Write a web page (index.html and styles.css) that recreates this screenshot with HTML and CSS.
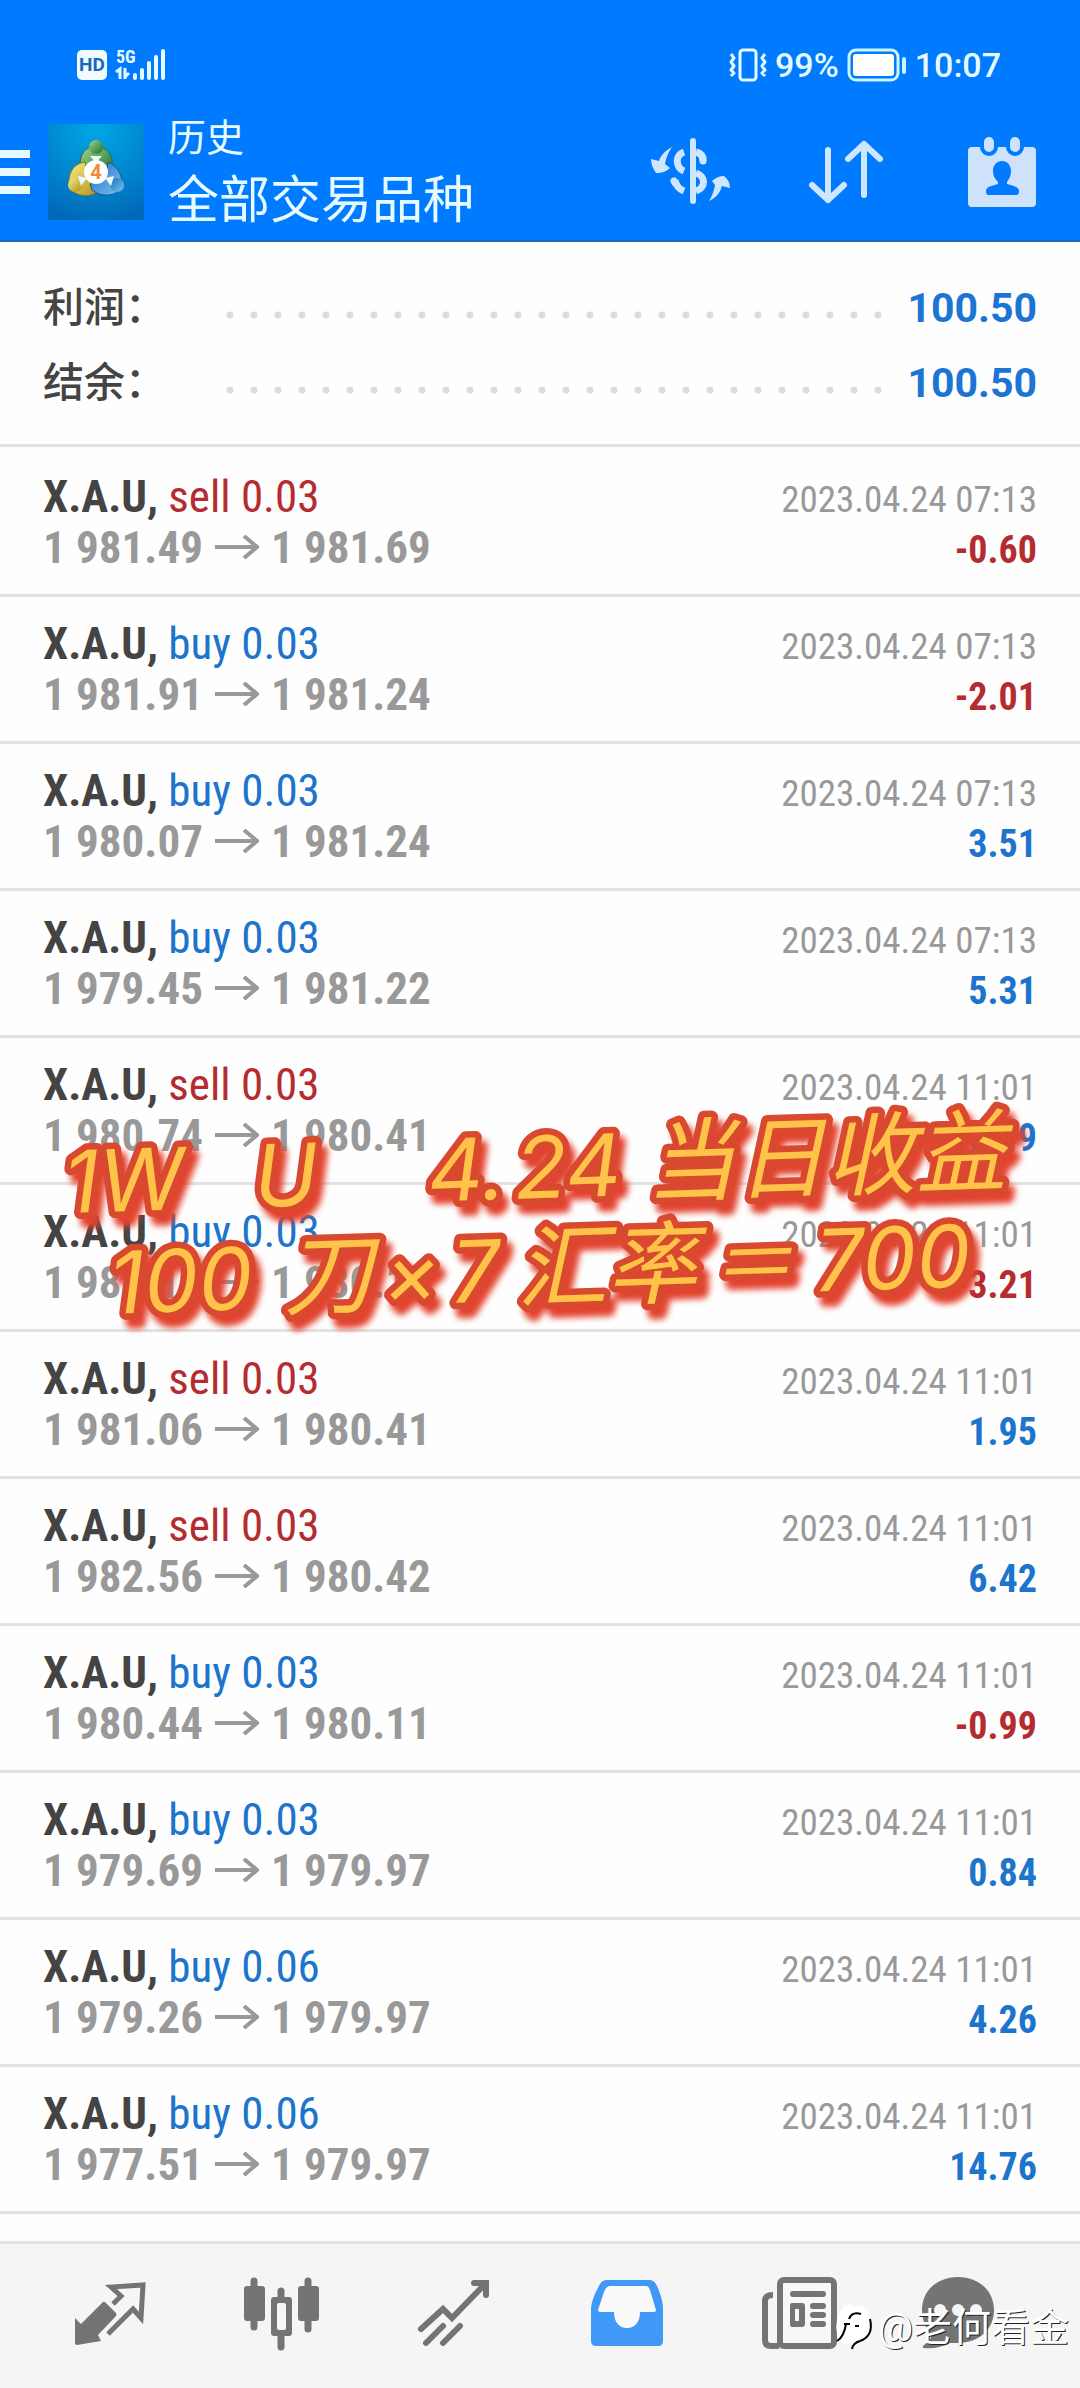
FILE: index.html
```html
<!DOCTYPE html>
<html lang="zh-CN">
<head>
<meta charset="utf-8">
<meta name="viewport" content="width=device-width, initial-scale=1">
<title>历史</title>
<link rel="stylesheet" href="styles.css">
</head>
<body>
<div class="app">
  <header class="header">
    <div class="status">
      <div class="status-side">
        <span class="hd">HD</span>
        <svg class="signal" width="52" height="34" viewBox="0 0 52 34" aria-hidden="true">
          <text class="signal-label" x="1" y="15">5G</text>
          <path d="M1 24l4-3v10M10 20v11M10 29l4-4" fill="none" stroke="#e6fbff" stroke-width="3"/>
          <path d="M20 27v3M27 22v8M34 15v15M41 9v21M48 3v27" stroke="#e6fbff" stroke-width="4" stroke-linecap="round"/>
        </svg>
      </div>
      <div class="status-side">
        <svg width="38" height="34" viewBox="0 0 38 34" aria-hidden="true" fill="none" stroke="#e6fbff" stroke-width="3">
          <rect x="11" y="2" width="16" height="30" rx="3"/>
          <path d="M2 6l3 4-3 4 3 4-3 4 3 3-3 3M36 6l-3 4 3 4-3 4 3 4-3 3 3 3" stroke-linejoin="round"/>
        </svg>
        <span>99%</span>
        <svg width="60" height="34" viewBox="0 0 60 34" aria-hidden="true">
          <rect x="2" y="2" width="49" height="30" rx="7" fill="none" stroke="#c9f6ff" stroke-width="3"/>
          <rect x="6" y="6" width="41" height="22" rx="3" fill="#fff"/>
          <rect x="55" y="9" width="4" height="17" rx="2" fill="#c9f6ff"/>
        </svg>
        <span class="clock">10:07</span>
      </div>
    </div>
    <div class="toolbar">
      <button class="menu" type="button" aria-label="菜单"><i></i><i></i><i></i></button>
      <svg class="logo" width="96" height="96" viewBox="0 0 96 96" aria-hidden="true">
        <defs>
          <radialGradient id="sky" cx="0.5" cy="0.05" r="1"><stop offset="0" stop-color="#00a6e6"/><stop offset="0.5" stop-color="#0089d0"/><stop offset="1" stop-color="#0068b8"/></radialGradient>
          <linearGradient id="green" x2="1" y2="1"><stop offset="0" stop-color="#a5d68a"/><stop offset="1" stop-color="#17702f"/></linearGradient>
          <linearGradient id="gold" x2="1" y2="1"><stop offset="0" stop-color="#f7ec8a"/><stop offset="1" stop-color="#b08f12"/></linearGradient>
          <linearGradient id="blue" x2="1" y2="1"><stop offset="0" stop-color="#1b6fc0"/><stop offset="1" stop-color="#7cc4f2"/></linearGradient>
        </defs>
        <rect width="96" height="96" fill="url(#sky)"/>
        <path d="M32 44C31 30 38 22 48 22s18 9 16 22l-5 9-22-1z" fill="url(#green)" stroke="#2b6b45"/>
        <path d="M37 38C24 40 20 50 21 63c6 9 18 11 27 6l4-8-12-8z" fill="url(#gold)" stroke="#6d7a2c"/>
        <path d="M60 38c11 5 15 15 14 26-6 8-20 10-30 2l-2-6 16-6z" fill="url(#blue)" stroke="#1d4f8c"/>
        <circle cx="48" cy="23" r="7" fill="url(#green)"/>
        <circle cx="27" cy="61" r="7" fill="url(#gold)"/>
        <circle cx="69" cy="61" r="7" fill="url(#blue)"/>
        <path d="M42 32h12l-6 7zM30 52l9 2-6 8zM66 52l-9 2 6 8z" fill="#e8fbf4"/>
        <circle cx="48" cy="48" r="12" fill="#fff"/>
        <text class="logo-digit" x="48" y="55" text-anchor="middle">4</text>
      </svg>
      <div class="titles">
        <div class="section">历史</div>
        <h1>全部交易品种</h1>
      </div>
      <div class="actions">
        <button type="button" aria-label="按货币">
          <svg width="96" height="96" viewBox="0 0 96 96">
            <path d="M51 17v60" stroke="#cfe6ff" stroke-width="6" stroke-linecap="round"/>
            <g fill="none" stroke="#cfe6ff" stroke-width="7">
              <path d="M42 28c-9 3-9 15 0 19M54 28c5 1 7 4 7 9" /><path d="M33 56c1 6 4 9 9 11M54 49c10 3 10 15 0 18"/>
              <path d="M61 34v3M32 57l1 2" stroke-linecap="round"/>
            </g>
            <path d="M30 23c-7 4-11 8-13 14l-8-2c0 5 2 10 5 14 6 0 10-1 14-5l-5-4c1-6 3-11 7-17zM67 77c7-3 11-8 13-15l8 2c0-5-2-9-6-12-5 0-9 2-12 5l3 4c-1 6-3 11-6 16z" fill="#cfe6ff"/>
          </svg>
        </button>
        <button type="button" aria-label="排序">
          <svg width="96" height="96" viewBox="0 0 96 96" fill="none" stroke="#cfe6ff" stroke-width="6" stroke-linecap="round" stroke-linejoin="round">
            <path d="M30 26v50M14 61l16 15 16-15M66 71V20M50 35l16-15 16 15"/>
          </svg>
        </button>
        <button type="button" aria-label="时间段">
          <svg width="96" height="96" viewBox="0 0 96 96">
            <rect x="14" y="23" width="68" height="60" rx="4" fill="#cfe2fc"/>
            <g fill="#cfe2fc" stroke="#007aff" stroke-width="4"><rect x="28" y="11" width="14" height="19" rx="7"/><rect x="54" y="11" width="14" height="19" rx="7"/></g>
            <path d="M48 37c5 0 9 4 9 10 0 5-2 8-4 11v2c7 2 12 3 12 7 0 3-1 4-3 4H35c-2 0-3-1-3-4 0-4 5-5 12-7v-2c-3-3-5-6-5-11 0-6 4-10 9-10z" fill="#007aff"/>
          </svg>
        </button>
      </div>
    </div>
  </header>

  <main class="content">
    <dl class="summary">
      <div><dt>利润：</dt><dd class="dots"></dd><dd>100.50</dd></div>
      <div><dt>结余：</dt><dd class="dots"></dd><dd>100.50</dd></div>
    </dl>
    <ul class="deals">
      <li><b>X.A.U, <span class="sell">sell 0.03</span></b><time>2023.04.24 07:13</time><span class="price">1 981.49<svg class="to"><use href="#to"/></svg>1 981.69</span><strong class="loss">-0.60</strong></li>
      <li><b>X.A.U, <span class="buy">buy 0.03</span></b><time>2023.04.24 07:13</time><span class="price">1 981.91<svg class="to"><use href="#to"/></svg>1 981.24</span><strong class="loss">-2.01</strong></li>
      <li><b>X.A.U, <span class="buy">buy 0.03</span></b><time>2023.04.24 07:13</time><span class="price">1 980.07<svg class="to"><use href="#to"/></svg>1 981.24</span><strong class="gain">3.51</strong></li>
      <li><b>X.A.U, <span class="buy">buy 0.03</span></b><time>2023.04.24 07:13</time><span class="price">1 979.45<svg class="to"><use href="#to"/></svg>1 981.22</span><strong class="gain">5.31</strong></li>
      <li><b>X.A.U, <span class="sell">sell 0.03</span></b><time>2023.04.24 11:01</time><span class="price">1 980.74<svg class="to"><use href="#to"/></svg>1 980.41</span><strong class="gain">0.99</strong></li>
      <li><b>X.A.U, <span class="buy">buy 0.03</span></b><time>2023.04.24 11:01</time><span class="price">1 981.18<svg class="to"><use href="#to"/></svg>1 980.11</span><strong class="loss">-3.21</strong></li>
      <li><b>X.A.U, <span class="sell">sell 0.03</span></b><time>2023.04.24 11:01</time><span class="price">1 981.06<svg class="to"><use href="#to"/></svg>1 980.41</span><strong class="gain">1.95</strong></li>
      <li><b>X.A.U, <span class="sell">sell 0.03</span></b><time>2023.04.24 11:01</time><span class="price">1 982.56<svg class="to"><use href="#to"/></svg>1 980.42</span><strong class="gain">6.42</strong></li>
      <li><b>X.A.U, <span class="buy">buy 0.03</span></b><time>2023.04.24 11:01</time><span class="price">1 980.44<svg class="to"><use href="#to"/></svg>1 980.11</span><strong class="loss">-0.99</strong></li>
      <li><b>X.A.U, <span class="buy">buy 0.03</span></b><time>2023.04.24 11:01</time><span class="price">1 979.69<svg class="to"><use href="#to"/></svg>1 979.97</span><strong class="gain">0.84</strong></li>
      <li><b>X.A.U, <span class="buy">buy 0.06</span></b><time>2023.04.24 11:01</time><span class="price">1 979.26<svg class="to"><use href="#to"/></svg>1 979.97</span><strong class="gain">4.26</strong></li>
      <li><b>X.A.U, <span class="buy">buy 0.06</span></b><time>2023.04.24 11:01</time><span class="price">1 977.51<svg class="to"><use href="#to"/></svg>1 979.97</span><strong class="gain">14.76</strong></li>
      <li><b>X.A.U, <span class="sell">sell 0.03</span></b></li>
    </ul>
  </main>

  <nav class="tabs">
    <button type="button" aria-label="行情">
      <svg width="96" height="96" viewBox="0 0 96 96">
        <path d="M51 36l8-8-10-9 32-2-2 33-8-9-25 25" fill="none" stroke="#747474" stroke-width="5"/>
        <path d="M41 34q1-1 3 1l10 10q1 2 0 3L36 67l3 6-24 4q-2 0-2-2V50l6 6z" fill="#747474"/>
      </svg>
    </button>
    <button type="button" aria-label="图表">
      <svg width="96" height="96" viewBox="0 0 96 96">
        <path d="M20 13v46M47 23v56M74 13v48" stroke="#747474" stroke-width="7" stroke-linecap="round"/>
        <g fill="#747474"><rect x="10" y="18" width="21" height="35" rx="3"/><rect x="37" y="29" width="21" height="39" rx="3"/><rect x="64" y="18" width="21" height="35" rx="3"/></g>
        <rect x="43" y="35" width="9" height="27" rx="2" fill="#f7f7f7"/>
      </svg>
    </button>
    <button type="button" aria-label="交易">
      <svg width="96" height="96" viewBox="0 0 96 96" fill="none" stroke="#747474" stroke-width="6" stroke-linecap="round">
        <path d="M15 61l22-20 9 9 34-35M68 15h12v12M37 58L20 75M54 58L37 75"/>
      </svg>
    </button>
    <button type="button" aria-label="历史" aria-current="page">
      <svg width="96" height="96" viewBox="0 0 96 96">
        <path d="M29 12h42c4 0 6 2 8 6 4 9 6 16 6 24v31q0 5-5 5H18q-5 0-5-5V42c0-8 4-17 8-24 2-4 4-6 8-6z" fill="#4098f7"/>
        <path d="M33 18h34c3 0 4 1 5 4l6 20q0 2-2 2H62c0 10-5 16-13 16s-13-6-13-16H22q-2 0-2-2l6-18c2-4 3-6 7-6z" fill="#fafafa"/>
      </svg>
    </button>
    <button type="button" aria-label="新闻">
      <svg width="96" height="96" viewBox="0 0 96 96">
        <path d="M23 27q-8 0-8 6v39q0 6 6 6h8" fill="none" stroke="#747474" stroke-width="6"/>
        <rect x="30" y="12" width="54" height="66" rx="4" fill="#f7f7f7" stroke="#747474" stroke-width="6"/>
        <path d="M43 26h30M63 38h10M63 47h10M63 56h10" stroke="#747474" stroke-width="6" stroke-linecap="round"/>
        <path d="M42 35h10q3 0 3 3v18q0 3-3 3H42q-2 0-2-3V38q0-3 2-3zM45 41v12h4V41z" fill="#747474" fill-rule="evenodd"/>
      </svg>
    </button>
    <button type="button" aria-label="消息">
      <svg width="96" height="96" viewBox="0 0 96 96">
        <path d="M36 9c21 0 36 14 36 33S57 75 36 75h-8c-7 4-17 6-26 5-2 0-1-2 0-3 4-3 7-6 8-10C4 61 0 52 0 42 0 23 15 9 36 9z" fill="#747474"/>
        <g fill="#f5f5f5"><circle cx="18" cy="42" r="6"/><circle cx="36" cy="42" r="6"/><circle cx="54" cy="42" r="6"/></g>
      </svg>
    </button>
  </nav>

  <svg class="sticker" viewBox="0 0 1080 300" role="img" aria-label="1W U 4.24当日收益 100刀×7汇率＝700">
    <g transform="rotate(-1.8)">
      <text y="155"><tspan x="60">1W</tspan><tspan x="250">U</tspan><tspan x="424">4.</tspan><tspan x="511">24</tspan><tspan class="han" x="642">当日收益</tspan></text>
      <text y="257"><tspan x="102">100</tspan><tspan class="han" x="276">刀</tspan><tspan x="376">×</tspan><tspan x="444">7</tspan><tspan class="han" x="510">汇率</tspan><tspan class="sign" x="702">＝</tspan><tspan x="808">700</tspan></text>
    </g>
  </svg>

  <div class="watermark">
    <svg width="44" height="50" viewBox="0 0 44 50" aria-hidden="true">
      <path d="M10 3q6-4 10 1 5-3 10 0 7 4 7 18 0 14-16 20l-4 4v-6q-6 3-10-1Q2 36 3 30q-3-14 7-27z" fill="#fff"/>
      <path d="M27 11q-9-3-12 5M12 21q-2 13-9 17M10 21h6M21 23h4" fill="none" stroke="#000" stroke-width="2"/>
      <path d="M36 16q4 17-10 22-7 2-8 8" fill="none" stroke="#000" stroke-width="2"/>
    </svg>
    <span>@老何看金</span>
  </div>
</div>

<svg class="defs" aria-hidden="true"><symbol id="to" viewBox="0 0 44 24"><path d="M0 12h42M29 1l13 11-13 11" fill="none" stroke="#999" stroke-width="4"/></symbol></svg>
</body>
</html>
```
FILE: styles.css
```css
* { box-sizing: border-box; }

body {
  margin: 0;
  background: #fefefe;
  color: #444;
  font-family: Roboto, "Noto Sans CJK SC", sans-serif;
}

button {
  padding: 0;
  border: 0;
  background: none;
}

svg { display: block; }

.defs {
  position: absolute;
  width: 0;
  height: 0;
}

.app {
  position: relative;
  display: flex;
  flex-direction: column;
  height: 100vh;
  overflow: hidden;
}

/* Header */
.header {
  flex: none;
  background: #007aff;
  border-bottom: 2px solid #1c6bb8;
  color: #e6fbff;
}

.status {
  display: flex;
  justify-content: space-between;
  align-items: center;
  padding: 45px 79px 0 77px;
  font-size: 34px;
  font-weight: 500;
  line-height: 40px;
}

.status-side {
  display: flex;
  align-items: center;
  gap: 8px;
}

.hd {
  width: 30px;
  border-radius: 5px;
  background: #f2fbff;
  color: #1668c0;
  font-size: 19px;
  font-weight: 700;
  line-height: 30px;
  text-align: center;
}

.signal { overflow: visible; }

.signal-label {
  fill: #e6fbff;
  font: 700 18px "Roboto Condensed", sans-serif;
}

.toolbar {
  display: flex;
  align-items: center;
  padding: 28px 30px 9px 0;
}

.menu {
  display: grid;
  gap: 10px;
  width: 30px;
  margin-right: 18px;
}

.menu i {
  height: 8px;
  background: #e6fbff;
}

.logo-digit {
  fill: #f08a3c;
  font: 700 20px Roboto, sans-serif;
}

.titles {
  flex: 1;
  margin-left: 24px;
  white-space: nowrap;
}

.section {
  font-size: 38px;
  line-height: 50px;
}

h1 {
  margin: 8px 0 0;
  font-size: 51px;
  font-weight: 400;
  line-height: 60px;
}

.actions {
  display: flex;
  gap: 60px;
}

/* Account totals */
.content {
  flex: 1;
  min-height: 0;
  overflow: hidden;
}

.summary {
  margin: 0;
  padding: 29px 43px 23px;
  border-bottom: 3px solid #e2e2e2;
}

.summary div {
  display: flex;
  align-items: center;
  font-size: 41px;
  line-height: 75px;
}

.summary dt {
  width: 175px;
  font-weight: 500;
}

.summary dd {
  margin: 0;
  color: #1c74d4;
  font-weight: 700;
}

.summary .dots {
  flex: 1;
  height: 24px;
  margin: 12px 16px 0 0;
  background: radial-gradient(circle, #dcdcdc 3px, transparent 4px) 0 0 / 24px 24px;
}

/* Deals */
.deals {
  margin: 0;
  padding: 3px 0 0;
  list-style: none;
  font-family: "Roboto Condensed", Roboto, sans-serif;
}

.deals li {
  display: grid;
  grid-template-columns: 1fr auto;
  grid-auto-rows: 51px;
  align-items: baseline;
  padding: 21px 43px;
  border-bottom: 3px solid #e2e2e2;
  line-height: 51px;
}

.deals b,
.price {
  font-size: 45px;
  font-weight: 700;
}

.deals b span { font-weight: 400; }

.price,
.deals time { color: #999; }

.deals time {
  font-size: 37px;
  line-height: 44px;
  text-align: right;
}

.deals strong {
  font-size: 38px;
  line-height: 44px;
  text-align: right;
}

.to {
  display: inline-block;
  width: 44px;
  height: 24px;
  margin: 0 12px;
  vertical-align: 4px;
}

.buy,
.gain { color: #1c74cc; }

.sell,
.loss { color: #b52c30; }

/* Tab bar */
.tabs {
  flex: none;
  display: flex;
  justify-content: space-between;
  padding: 24px 62px;
  border-top: 3px solid #e2e2e2;
  background: #f5f5f5;
}

/* Caption laid over the list */
.sticker {
  position: absolute;
  top: 1060px;
  left: 0;
  width: 100%;
  filter: drop-shadow(6px 9px 3px #e2432f);
}

.sticker text {
  fill: #ffc34a;
  stroke: #d9492f;
  stroke-width: 13px;
  stroke-linejoin: round;
  paint-order: stroke;
  font: italic 400 86px Inter, "Noto Sans CJK SC", sans-serif;
}

.sticker .han {
  font-size: 90px;
}

.sticker .sign {
  font-size: 84px;
}

.watermark {
  position: absolute;
  right: 11px;
  bottom: 32px;
  display: flex;
  align-items: center;
  color: #fff;
  font-size: 39px;
  line-height: 56px;
  text-shadow: 1px 1px 0 #222;
}
```
